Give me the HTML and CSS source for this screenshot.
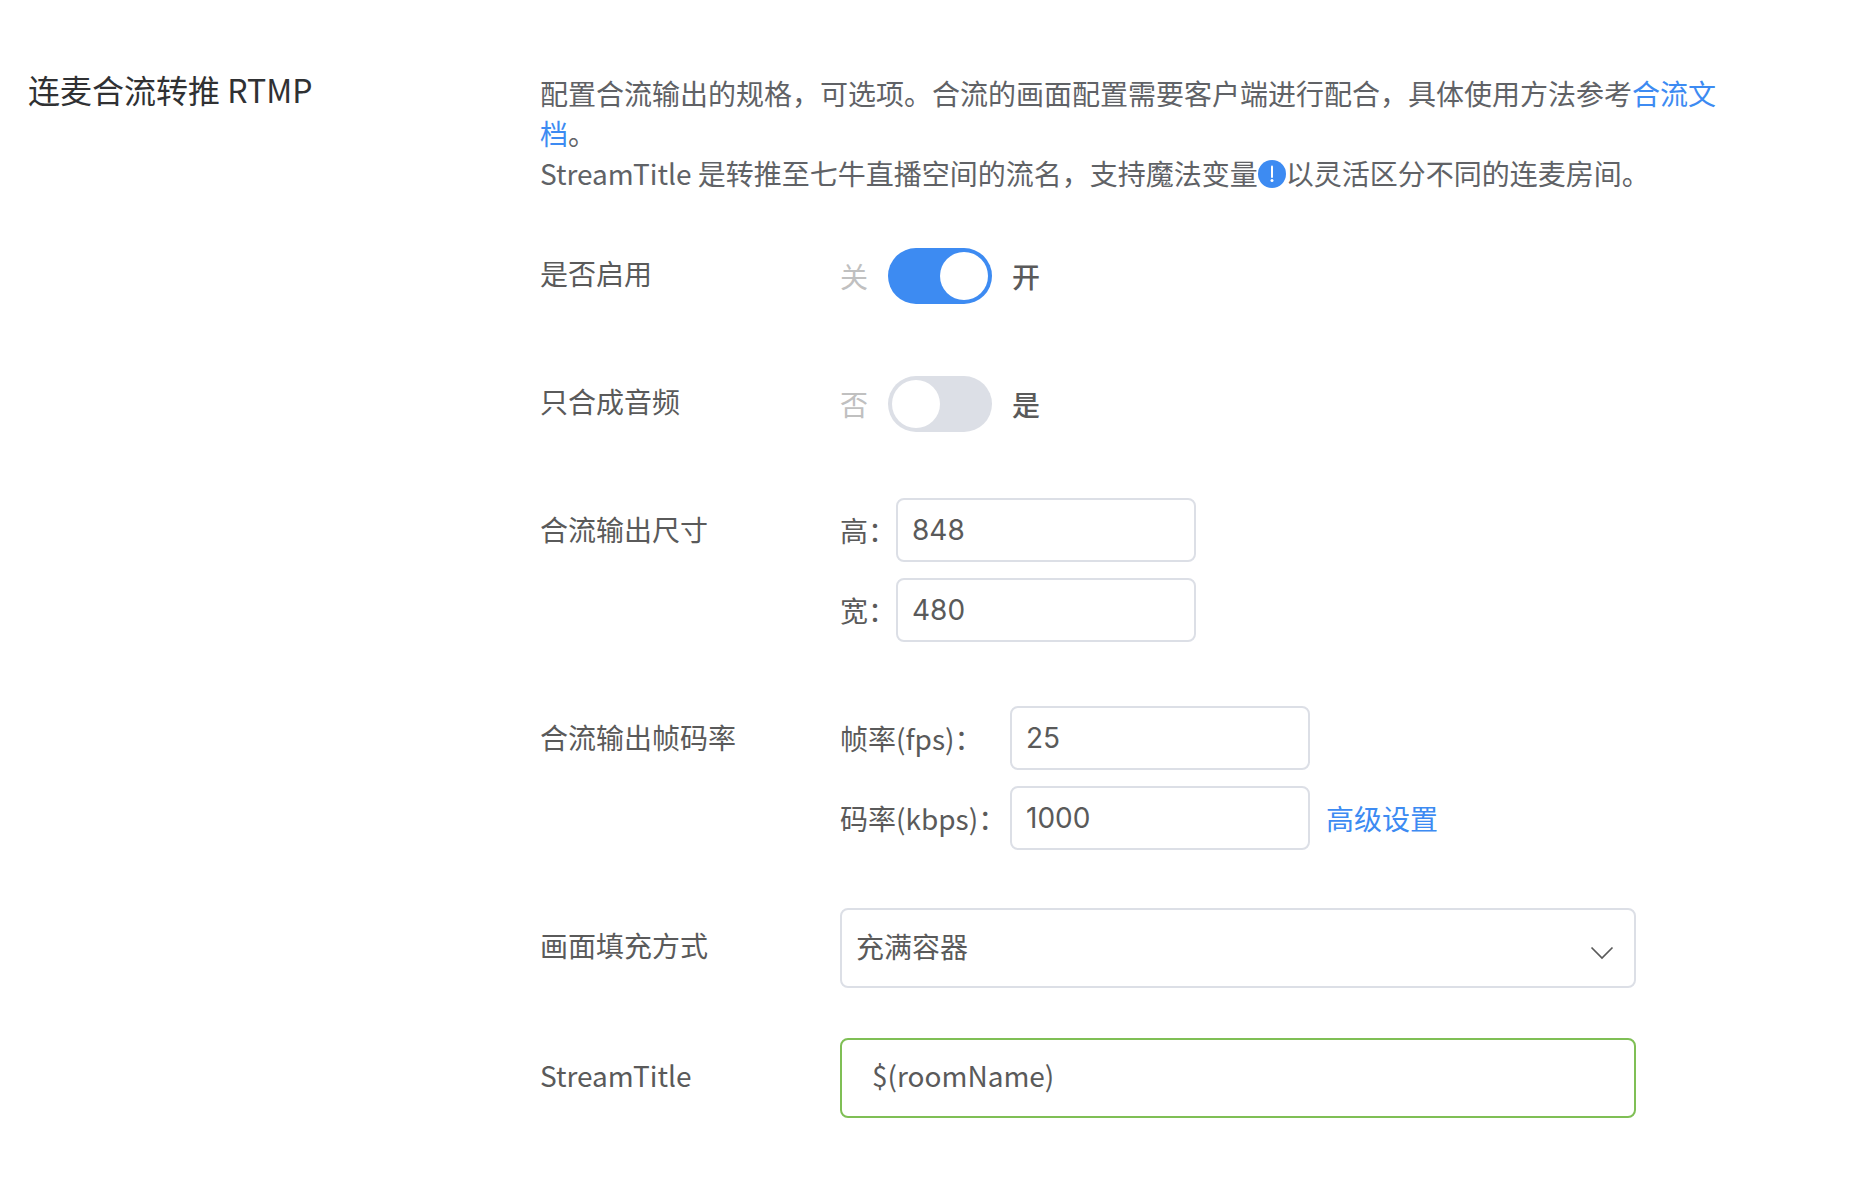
FILE: index.html
```html
<!DOCTYPE html>
<html lang="zh-CN">
<head>
<meta charset="utf-8">
<meta name="viewport" content="width=device-width, initial-scale=1">
<title>连麦合流转推 RTMP</title>
<link rel="stylesheet" href="styles.css">
</head>
<body>
<main class="section">
  <h2 class="section-title">连麦合流转推 RTMP</h2>
  <form class="section-body">
    <p class="intro">配置合流输出的规格，可选项。合流的画面配置需要客户端进行配合，具体使用方法参考<a class="link" href="#doc">合流文档</a>。<br>StreamTitle 是转推至七牛直播空间的流名，支持魔法变量<svg class="tip" viewBox="0 0 28 28" role="img" aria-label="提示"><circle cx="14" cy="14" r="14" fill="#3d8bf2"/><path d="M14 6.5v10.5" stroke="#fff" stroke-width="2" stroke-linecap="round"/><circle cx="14" cy="20.6" r="1.5" fill="#fff"/></svg>以灵活区分不同的连麦房间。</p>

    <div class="row row-switch">
      <label class="row-label" for="enabled">是否启用</label>
      <div class="switch-group">
        <span class="switch-off">关</span>
        <input class="switch" id="enabled" type="checkbox" role="switch" checked>
        <span class="switch-on">开</span>
      </div>
    </div>

    <div class="row row-switch">
      <label class="row-label" for="audio">只合成音频</label>
      <div class="switch-group">
        <span class="switch-off">否</span>
        <input class="switch" id="audio" type="checkbox" role="switch">
        <span class="switch-on">是</span>
      </div>
    </div>

    <div class="row">
      <span class="row-label">合流输出尺寸</span>
      <div class="fields fields-size">
        <label for="height">高：</label>
        <input class="input" id="height" type="text" value="848">
        <label for="width">宽：</label>
        <input class="input" id="width" type="text" value="480">
      </div>
    </div>

    <div class="row row-rate">
      <span class="row-label">合流输出帧码率</span>
      <div class="fields fields-rate">
        <label for="fps">帧率(fps)：</label>
        <input class="input" id="fps" type="text" value="25">
        <label for="kbps">码率(kbps)：</label>
        <div class="input-with-link">
          <input class="input" id="kbps" type="text" value="1000">
          <a class="link" href="#advanced">高级设置</a>
        </div>
      </div>
    </div>

    <div class="row row-large">
      <label class="row-label" for="fill">画面填充方式</label>
      <div class="select-wrap">
        <select class="input select" id="fill">
          <option selected>充满容器</option>
        </select>
        <svg class="chevron" viewBox="0 0 24 14" aria-hidden="true"><path d="M1.5 1.5 12 12 22.5 1.5" fill="none" stroke="#5a5a5a" stroke-width="1.7"/></svg>
      </div>
    </div>

    <div class="row row-large">
      <label class="row-label" for="title">StreamTitle</label>
      <input class="input input-valid" id="title" type="text" value="$(roomName)">
    </div>
  </form>
</main>
</body>
</html>
```
FILE: styles.css
```css
* {
  box-sizing: border-box;
}

body {
  margin: 0;
  background: #fff;
  color: #5a5a5a;
  font: 28px/40px "Noto Sans CJK SC", sans-serif;
}

.section {
  display: grid;
  grid-template-columns: 512px minmax(0, 1fr);
  padding: 69px 120px 64px 28px;
}

.section-title {
  margin: 0;
  color: #303133;
  font-size: 32px;
  font-weight: 400;
}

.intro {
  margin: 4px 0 49px;
  color: #606266;
}

.link {
  color: #3d8bf2;
  text-decoration: none;
}

.tip {
  width: 28px;
  height: 28px;
  vertical-align: -3px;
}

.row {
  display: grid;
  grid-template-columns: 300px minmax(0, 796px);
  margin-bottom: 64px;
}

.row-label {
  line-height: 62px;
}

.row-switch {
  margin-bottom: 60px;
}

.row-rate {
  margin-bottom: 58px;
}

.row-large {
  margin-bottom: 50px;
}

.row-large .row-label {
  line-height: 74px;
}

.switch-group {
  display: flex;
  align-items: center;
  gap: 20px;
  height: 68px;
}

.switch-off {
  color: #c0c0c0;
}

.switch-on {
  font-weight: 500;
}

.switch {
  appearance: none;
  width: 104px;
  height: 56px;
  margin: 0;
  padding: 4px;
  border-radius: 28px;
  background: #dcdfe6;
}

.switch::before {
  content: "";
  display: block;
  width: 48px;
  height: 48px;
  border-radius: 50%;
  background: #fff;
}

.switch:checked {
  background: #3d8bf2;
}

.switch:checked::before {
  margin-left: auto;
}

.fields {
  display: grid;
  align-items: center;
  row-gap: 16px;
}

.fields-size {
  grid-template-columns: 56px 1fr;
}

.fields-rate {
  grid-template-columns: 170px 1fr;
}

.input-with-link {
  display: flex;
  align-items: center;
  gap: 16px;
}

.input {
  width: 300px;
  height: 64px;
  padding: 0 14px;
  border: 2px solid #dcdfe6;
  border-radius: 8px;
  background: #fff;
  color: #5a5a5a;
  font: 28px/40px Inter, "Noto Sans CJK SC", sans-serif;
}

.select-wrap {
  position: relative;
}

.select,
.input-valid {
  width: 100%;
  height: 80px;
}

.select {
  appearance: none;
}

.chevron {
  position: absolute;
  top: 38px;
  right: 22px;
  width: 24px;
  height: 14px;
  pointer-events: none;
}

.input-valid {
  padding: 0 30px 6px;
  border-color: #7fbf55;
  font-family: "Noto Sans CJK SC", sans-serif;
}
```
